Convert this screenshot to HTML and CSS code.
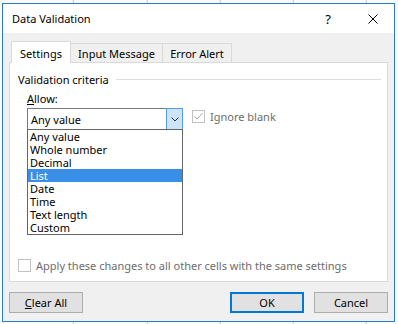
FILE: index.html
```html
<!DOCTYPE html>
<html>
<head>
<meta charset="utf-8">
<link rel="stylesheet" href="styles.css">
</head>
<body>
<div class="desktop">
  <div class="window">
    <div class="titlebar">
      <span class="title">Data Validation</span>
      <span class="help">?</span>
      <span class="close"><svg width="10" height="10" viewBox="0 0 10 10"><path d="M0.5 0.5L9.5 9.5M9.5 0.5L0.5 9.5" stroke="#000" stroke-width="1" fill="none"/></svg></span>
    </div>
    <div class="body">
      <div class="tabs">
        <div class="tab active tab-settings">Settings</div>
        <div class="tab tab-input">Input Message</div>
        <div class="tab tab-error">Error Alert</div>
      </div>
      <div class="panel">
        <div class="group-head"><span>Validation criteria</span><span class="rule"></span></div>
        <div class="allow-row">
          <div class="allow-col">
            <div class="label"><u>A</u>llow:</div>
            <div class="combo">
              <span class="combo-value">Any value</span>
              <span class="combo-btn"><svg width="8" height="5" viewBox="0 0 8 5"><path d="M0.5 0.5L4 4L7.5 0.5" stroke="#333" stroke-width="1" fill="none"/></svg></span>
              <ul class="listbox">
                <li>Any value</li>
                <li>Whole number</li>
                <li>Decimal</li>
                <li class="selected">List</li>
                <li>Date</li>
                <li>Time</li>
                <li>Text length</li>
                <li>Custom</li>
              </ul>
            </div>
          </div>
          <div class="check check-ignore disabled">
            <span class="box"><svg width="11" height="11" viewBox="0 0 11 11"><path d="M1.5 5.5L4 8L9.5 2" stroke="#a8a8a8" stroke-width="1" fill="none"/></svg></span>
            <span>Ignore blank</span>
          </div>
        </div>
        <div class="check check-apply disabled">
          <span class="box"></span>
          <span>Apply these changes to all other cells with the same settings</span>
        </div>
      </div>
      <div class="buttons">
        <button class="btn"><u>C</u>lear All</button>
        <span class="grow"></span>
        <button class="btn default">OK</button>
        <button class="btn">Cancel</button>
      </div>
    </div>
  </div>
</div>
</body>
</html>
```

FILE: styles.css
```css
html, body {
  margin: 0;
  padding: 0;
}
body {
  width: 398px;
  height: 324px;
  overflow: hidden;
  font-family: "Noto Sans", "Open Sans", sans-serif;
  font-size: 11px;
  color: #000;
}
.desktop {
  width: 398px;
  height: 324px;
  box-sizing: border-box;
  padding: 3px 3px 2px 2px;
  background-color: #fafafa;
  background-image: repeating-linear-gradient(90deg, transparent 0 72.25px, #c8c8c8 72.25px 73.25px);
  background-position: 0.75px 0;
}
.window {
  height: 100%;
  box-sizing: border-box;
  border: 1px solid #2b79c8;
  background: #f0f0f0;
  display: flex;
  flex-direction: column;
}
.titlebar {
  height: 29px;
  flex: none;
  background: #fff;
  display: flex;
  align-items: center;
  padding: 0 16px 0 9px;
  font-size: 11px;
}
.title {
  flex: 1;
}
.help {
  font-size: 13px;
  margin-right: 37px;
}
.close {
  display: flex;
  width: 10px;
  height: 10px;
}
.body {
  flex: 1;
  display: flex;
  flex-direction: column;
  padding: 8px 6px;
}
.tabs {
  display: flex;
  align-items: flex-end;
  height: 21px;
  padding-left: 2px;
  position: relative;
  z-index: 1;
}
.tab {
  box-sizing: border-box;
  height: 19px;
  border: 1px solid #d9d9d9;
  border-bottom: none;
  background: #f0f0f0;
  display: flex;
  align-items: center;
  justify-content: center;
  margin-left: -1px;
  padding-top: 1px;
}
.tab.active {
  height: 22px;
  margin-bottom: -1px;
  margin-left: 0;
  background: #fff;
  position: relative;
  z-index: 2;
}
.tab-settings { width: 60px; }
.tab-input { width: 93px; }
.tab-error { width: 70px; }
.panel {
  height: 220px;
  box-sizing: border-box;
  border: 1px solid #d9d9d9;
  background: #fff;
  display: flex;
  flex-direction: column;
  padding: 8px 6px 9px 8px;
}
.group-head {
  display: flex;
  align-items: center;
  height: 16px;
}
.group-head .rule {
  flex: 1;
  height: 1px;
  background: #dcdcdc;
  margin-left: 7px;
}
.allow-row {
  display: flex;
  margin: 4px 0 0 9px;
}
.allow-col {
  width: 156px;
}
.label {
  height: 16px;
  line-height: 16px;
  margin-bottom: 1px;
}
.combo {
  position: relative;
  height: 22px;
  box-sizing: border-box;
  border: 1px solid #7a7a7a;
  background: #fff;
  display: flex;
  align-items: center;
}
.combo-value {
  flex: 1;
  padding-left: 3px;
}
.combo-btn {
  width: 17px;
  align-self: stretch;
  margin: -1px -1px -1px 0;
  box-sizing: border-box;
  border: 1px solid #569de5;
  background: #cce4f7;
  display: flex;
  align-items: center;
  justify-content: center;
}
.combo-btn svg {
  display: block;
}
.listbox {
  position: absolute;
  left: -1px;
  right: -1px;
  top: 100%;
  margin: 0;
  padding: 0;
  list-style: none;
  border: 1px solid #646464;
  background: #fff;
}
.listbox li {
  height: 13px;
  line-height: 13px;
  padding-left: 2px;
  white-space: nowrap;
}
.listbox li.selected {
  background: #3a8ee6;
  color: #fff;
}
.check {
  display: flex;
  align-items: center;
  gap: 5px;
  height: 13px;
}
.check.disabled {
  color: #6d6d6d;
}
.check .box {
  width: 13px;
  height: 13px;
  box-sizing: border-box;
  border: 1px solid #c2c2c2;
  background: #fff;
  display: flex;
  align-items: center;
  justify-content: center;
  flex: none;
}
.check .box svg {
  display: block;
}
.check-ignore {
  margin: 19px 0 0 9px;
}
.check-apply {
  margin-top: auto;
  white-space: nowrap;
}
.buttons {
  display: flex;
  gap: 10px;
  margin-top: 10px;
  height: 21px;
}
.grow {
  flex: 1;
}
.btn {
  width: 74px;
  height: 21px;
  box-sizing: border-box;
  border: 1px solid #adadad;
  background: #e1e1e1;
  font: inherit;
  color: #000;
  padding: 0;
  margin: 0;
}
.btn.default {
  border: 2px solid #0078d7;
}
```
